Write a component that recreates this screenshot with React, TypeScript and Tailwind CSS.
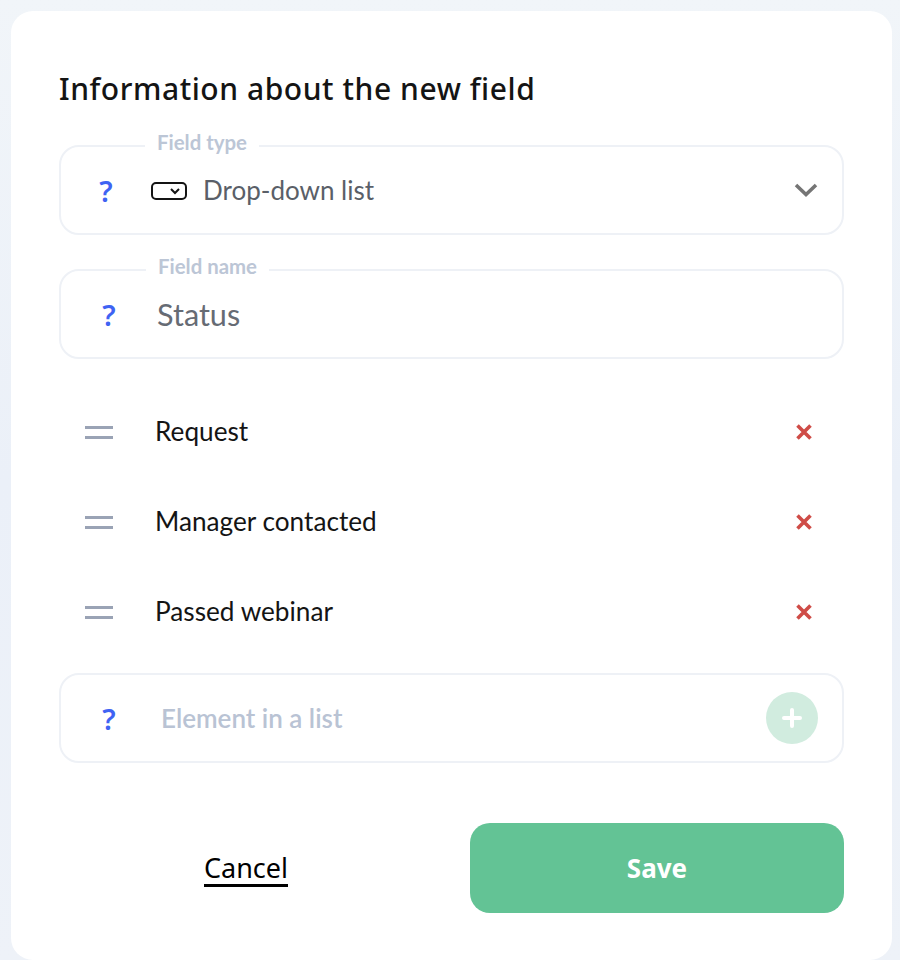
import React from "react";

const Q = () => (
  <span className="block w-[14px] text-center font-['Noto_Sans',sans-serif] text-[29px] leading-none font-semibold text-[#3f63f3]">?</span>
);

function Row({ label }: { label: string }) {
  return (
    <div className="flex h-[90px] items-center pl-[26px] pr-[31px]">
      <div className="flex w-[28px] flex-col gap-[7px]">
        <div className="h-[3px] bg-[#9aa3b5]" />
        <div className="h-[3px] bg-[#9aa3b5]" />
      </div>
      <span className="ml-[42px] flex-1 text-[26.2px] text-[#141414]">{label}</span>
      <svg width="18" height="18" viewBox="0 0 18 18" fill="none" stroke="#cf4c47" strokeWidth="3.6">
        <path d="M2.5 2.5 15.5 15.5M15.5 2.5 2.5 15.5" />
      </svg>
    </div>
  );
}

function Field({ label, labelLeft, children }: { label: string; labelLeft: string; children: React.ReactNode }) {
  return (
    <div className="relative flex h-[90px] items-center rounded-[20px] border-2 border-[#eef1f6]">
      <span className={`absolute top-[-18px] bg-white px-3 text-[20.4px] leading-[26px] font-bold text-[#bcc6d6] ${labelLeft}`}>{label}</span>
      {children}
    </div>
  );
}

export default function App() {
  return (
    <div className="h-[960px] overflow-hidden bg-linear-to-b from-[#f1f5f9] via-[#ebf0f8] to-[#eef2f8] pt-[11px] pl-[11px] font-['Lato',sans-serif]">
      <div className="h-[949px] w-[881px] rounded-[22px] bg-white px-[48px] pt-[57px]">
        <h1 className="h-[42px] font-['Noto_Sans',sans-serif] text-[30px] leading-[42px] font-medium tracking-[0.56px] text-[#141414]">
          Information about the new field
        </h1>
        <div className="mt-[35px]">
          <Field label="Field type" labelLeft="left-[84px]">
            <div className="ml-[38px]"><Q /></div>
            <svg className="ml-[38px] mt-[2px]" width="36" height="18" viewBox="0 0 36 18" fill="none" stroke="#141414">
              <rect x="1" y="1" width="34" height="16" rx="4" strokeWidth="2" />
              <path d="M20 7 24 11 28 7" strokeWidth="2" />
            </svg>
            <span className="ml-[16px] mt-[1px] flex-1 text-[26px] text-[#5a5f68]">Drop-down list</span>
            <svg className="mr-[24px]" width="24" height="16" viewBox="0 0 24 16" fill="none" stroke="#757575" strokeWidth="3.6">
              <path d="M2 3 12 12.5 22 3" />
            </svg>
          </Field>
        </div>
        <div className="mt-[34px]">
          <Field label="Field name" labelLeft="left-[85px]">
            <div className="ml-[41px]"><Q /></div>
            <span className="ml-[41px] mt-[2px] text-[30.6px] text-[#666b74]">Status</span>
          </Field>
        </div>
        <div className="mt-[28px]">
          <Row label="Request" />
          <Row label="Manager contacted" />
          <Row label="Passed webinar" />
        </div>
        <div className="mt-[16px] flex h-[90px] items-center rounded-[20px] border-2 border-[#eef1f6]">
          <div className="ml-[41px]"><Q /></div>
          <span className="ml-[45px] flex-1 text-[26px] font-semibold text-[#b9c3d4]">Element in a list</span>
          <div className="mr-[24px] flex h-[52px] w-[52px] items-center justify-center rounded-full bg-[#d1ecdf]">
            <svg width="20" height="20" viewBox="0 0 20 20" fill="none" stroke="#ffffff" strokeWidth="4" strokeLinecap="round">
              <path d="M10 2V18M2 10H18" />
            </svg>
          </div>
        </div>
        <div className="mt-[60px] flex items-center justify-between">
          <div className="flex w-[374px] justify-center">
            <span className="mt-[3px] border-b-[3px] border-black font-['Noto_Sans',sans-serif] text-[27px] leading-[32px] text-black">Cancel</span>
          </div>
          <button className="h-[90px] w-[374px] rounded-[20px] bg-[#63c395] font-['Noto_Sans',sans-serif] text-[26px] font-bold text-white">Save</button>
        </div>
      </div>
    </div>
  );
}
